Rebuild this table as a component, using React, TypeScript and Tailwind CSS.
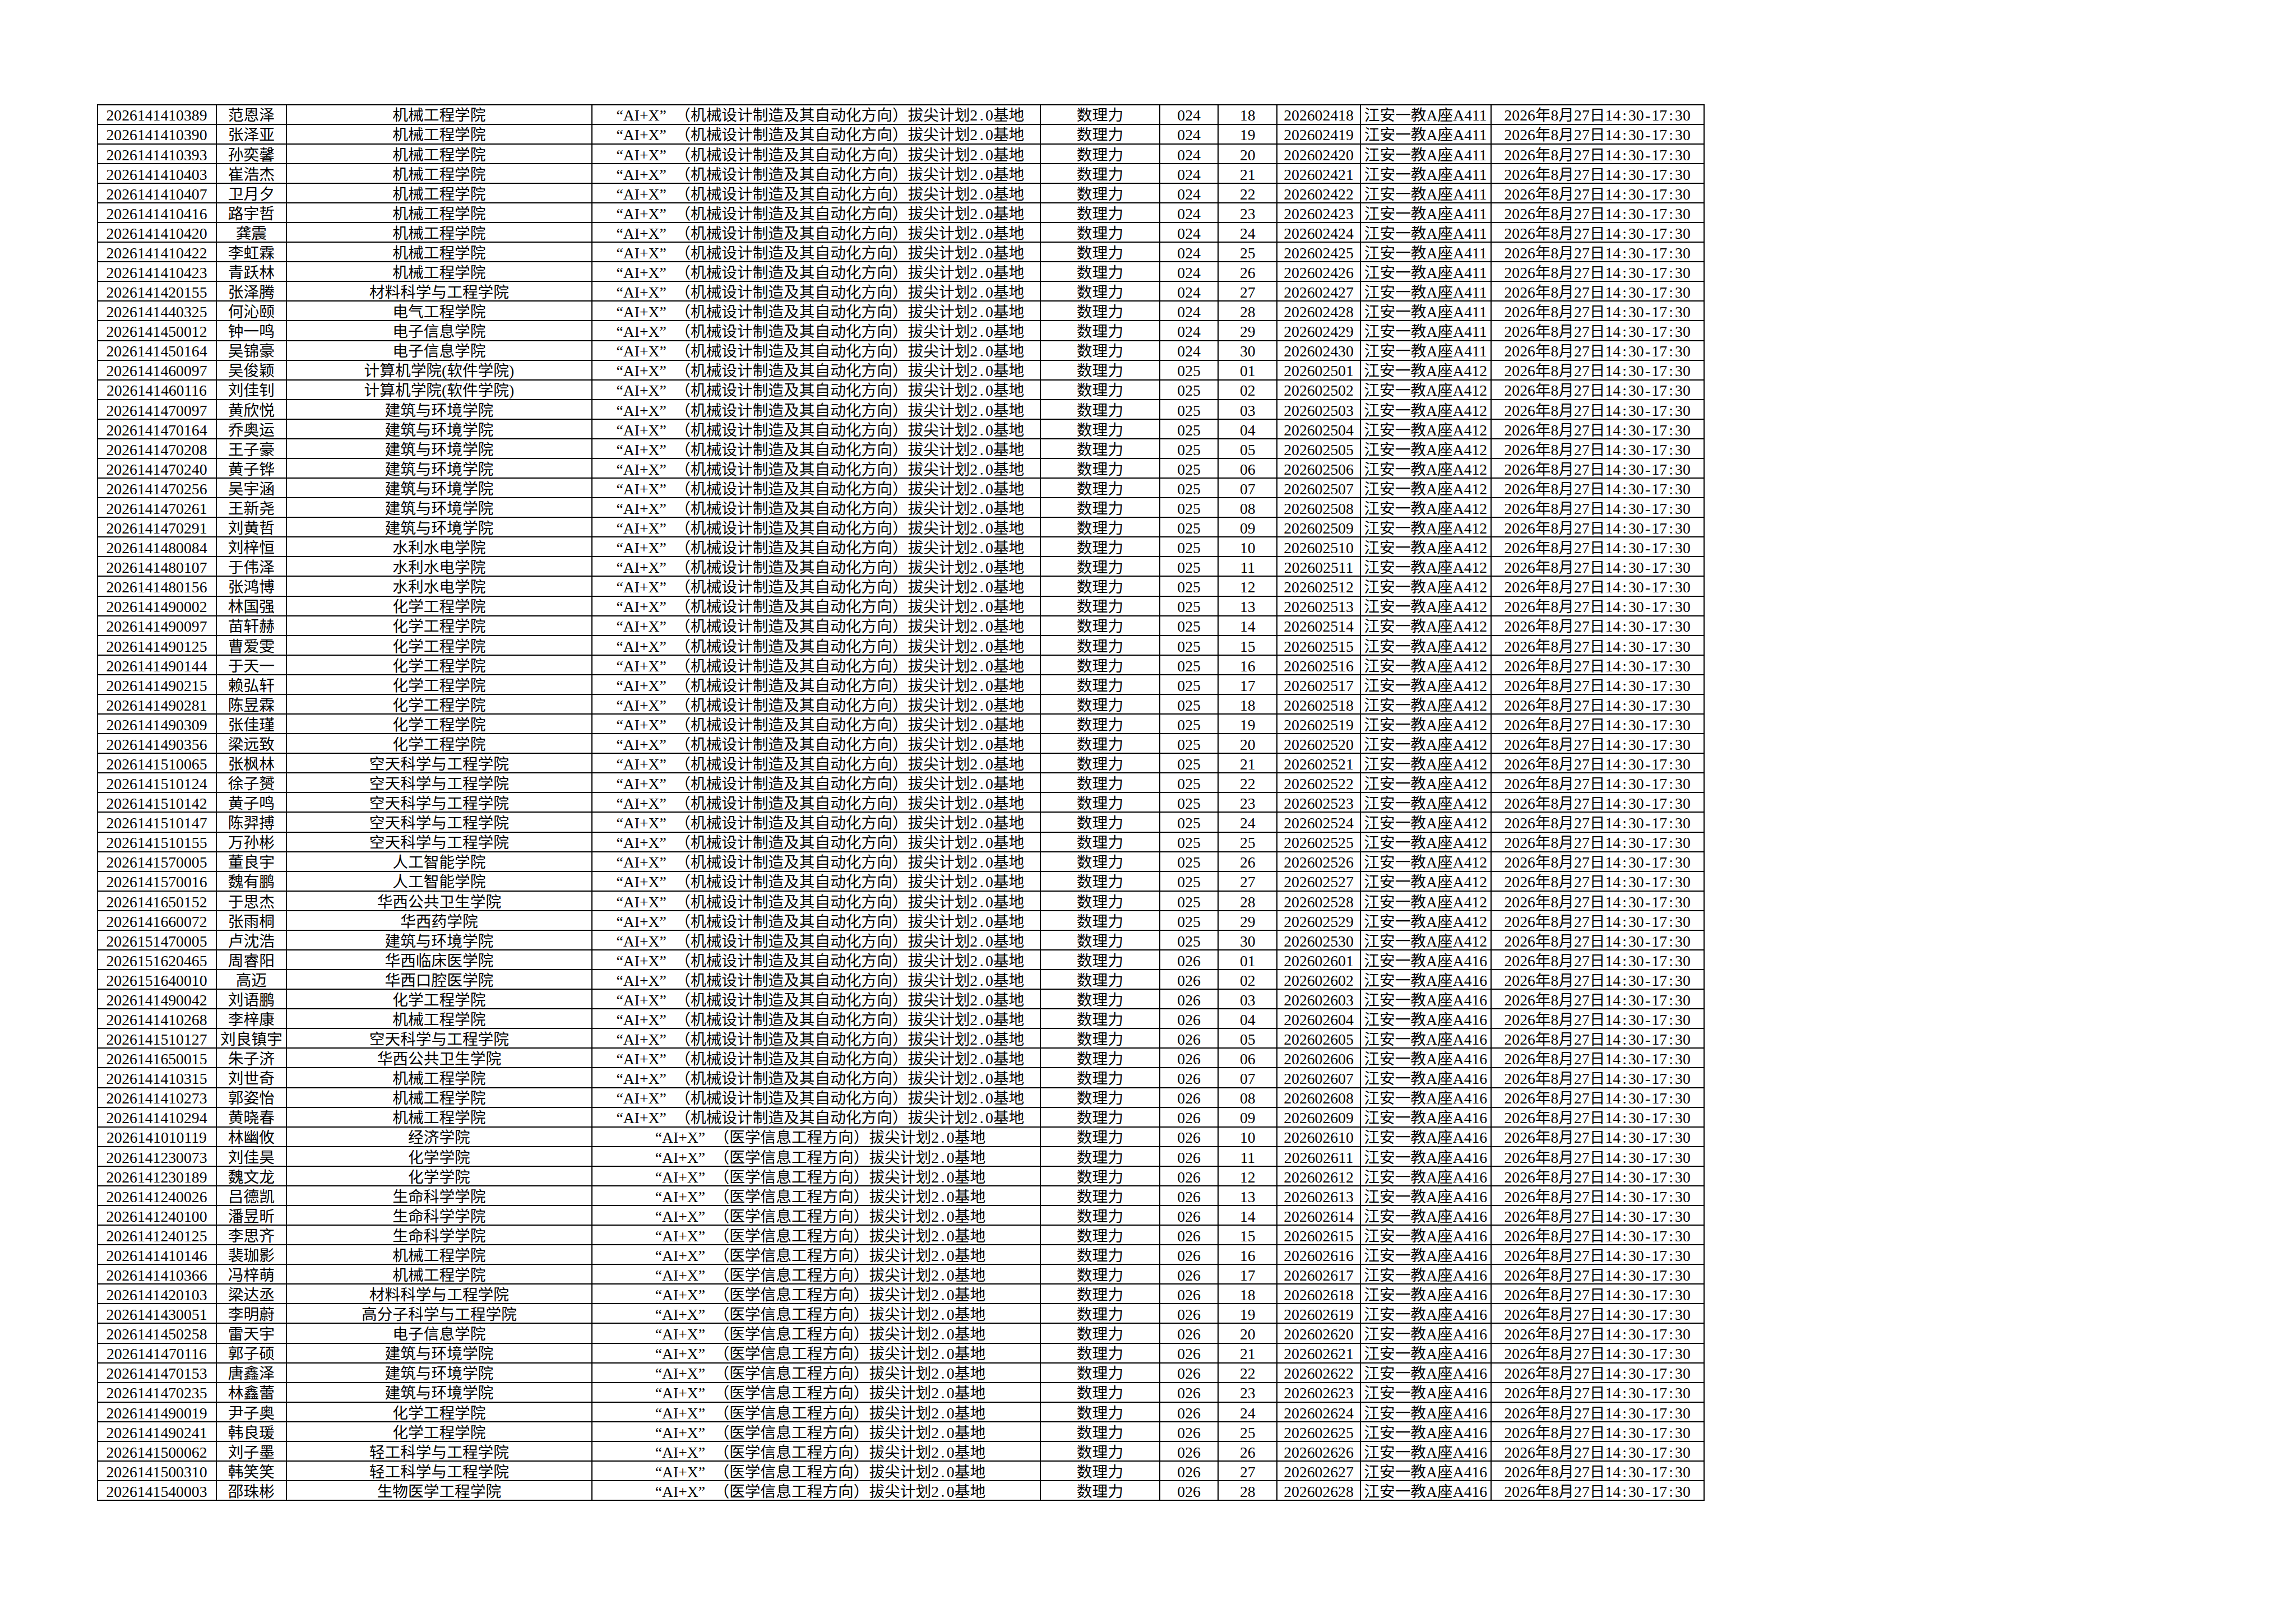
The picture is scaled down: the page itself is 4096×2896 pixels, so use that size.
import React from "react";

const raw = `2026141410389 范恩泽 机械工程学院
2026141410390 张泽亚 机械工程学院
2026141410393 孙奕馨 机械工程学院
2026141410403 崔浩杰 机械工程学院
2026141410407 卫月夕 机械工程学院
2026141410416 路宇哲 机械工程学院
2026141410420 龚震 机械工程学院
2026141410422 李虹霖 机械工程学院
2026141410423 青跃林 机械工程学院
2026141420155 张泽腾 材料科学与工程学院
2026141440325 何沁颐 电气工程学院
2026141450012 钟一鸣 电子信息学院
2026141450164 吴锦豪 电子信息学院
2026141460097 吴俊颖 计算机学院(软件学院)
2026141460116 刘佳钊 计算机学院(软件学院)
2026141470097 黄欣悦 建筑与环境学院
2026141470164 乔奥运 建筑与环境学院
2026141470208 王子豪 建筑与环境学院
2026141470240 黄子铧 建筑与环境学院
2026141470256 吴宇涵 建筑与环境学院
2026141470261 王新尧 建筑与环境学院
2026141470291 刘黄哲 建筑与环境学院
2026141480084 刘梓恒 水利水电学院
2026141480107 于伟泽 水利水电学院
2026141480156 张鸿博 水利水电学院
2026141490002 林国强 化学工程学院
2026141490097 苗轩赫 化学工程学院
2026141490125 曹爱雯 化学工程学院
2026141490144 于天一 化学工程学院
2026141490215 赖弘轩 化学工程学院
2026141490281 陈昱霖 化学工程学院
2026141490309 张佳瑾 化学工程学院
2026141490356 梁远致 化学工程学院
2026141510065 张枫林 空天科学与工程学院
2026141510124 徐子赟 空天科学与工程学院
2026141510142 黄子鸣 空天科学与工程学院
2026141510147 陈羿搏 空天科学与工程学院
2026141510155 万孙彬 空天科学与工程学院
2026141570005 董良宇 人工智能学院
2026141570016 魏有鹏 人工智能学院
2026141650152 于思杰 华西公共卫生学院
2026141660072 张雨桐 华西药学院
2026151470005 卢沈浩 建筑与环境学院
2026151620465 周睿阳 华西临床医学院
2026151640010 高迈 华西口腔医学院
2026141490042 刘语鹏 化学工程学院
2026141410268 李梓康 机械工程学院
2026141510127 刘良镇宇 空天科学与工程学院
2026141650015 朱子济 华西公共卫生学院
2026141410315 刘世奇 机械工程学院
2026141410273 郭姿怡 机械工程学院
2026141410294 黄晓春 机械工程学院
2026141010119 林幽攸 经济学院
2026141230073 刘佳昊 化学学院
2026141230189 魏文龙 化学学院
2026141240026 吕德凯 生命科学学院
2026141240100 潘昱昕 生命科学学院
2026141240125 李思齐 生命科学学院
2026141410146 裴珈影 机械工程学院
2026141410366 冯梓萌 机械工程学院
2026141420103 梁达丞 材料科学与工程学院
2026141430051 李明蔚 高分子科学与工程学院
2026141450258 雷天宇 电子信息学院
2026141470116 郭子硕 建筑与环境学院
2026141470153 唐鑫泽 建筑与环境学院
2026141470235 林鑫蕾 建筑与环境学院
2026141490019 尹子奥 化学工程学院
2026141490241 韩良瑗 化学工程学院
2026141500062 刘子墨 轻工科学与工程学院
2026141500310 韩笑笑 轻工科学与工程学院
2026141540003 邵珠彬 生物医学工程学院`;

type Row = {
  id: string;
  name: string;
  college: string;
  med: boolean;
  group: string;
  seat: string;
  room: string;
};

const rows: Row[] = raw.split("\n").map((line, i) => {
  const [id, name, college] = line.trim().split(" ");
  let group = "024";
  let seatNum = 18 + i;
  if (i >= 13 && i < 43) {
    group = "025";
    seatNum = i - 12;
  } else if (i >= 43) {
    group = "026";
    seatNum = i - 42;
  }
  const room = group === "024" ? "A411" : group === "025" ? "A412" : "A416";
  return {
    id,
    name,
    college,
    med: i >= 52,
    group,
    seat: String(seatNum).padStart(2, "0"),
    room,
  };
});

function Cell({ children }: { children: React.ReactNode }) {
  return (
    <div className="bg-white flex items-end justify-center pb-[0.6px] leading-none whitespace-nowrap">
      <span className="leading-none">{children}</span>
    </div>
  );
}

function Half({ children }: { children: React.ReactNode }) {
  return <span className="inline-block w-[0.5em] text-center">{children}</span>;
}

function Program({ med }: { med: boolean }) {
  return (
    <>
      <span className="inline-block w-[1em] text-right">“</span>
      AI+X
      <span className="inline-block w-[1em] text-left">”</span>
      <span className="font-[family-name:Noto_Sans_CJK_SC]">（</span>
      {med ? "医学信息工程方向" : "机械设计制造及其自动化方向"}
      <span className="font-[family-name:Noto_Sans_CJK_SC]">）</span>
      拔尖计划2<Half>.</Half>0基地
    </>
  );
}

function Time() {
  return (
    <>
      2026年8月27日14<Half>:</Half>30<Half>-</Half>17<Half>:</Half>30
    </>
  );
}

export default function App() {
  return (
    <div className="w-[4096px] h-[2896px] bg-white pl-[172.5px] pt-[185.4px] text-black text-[27.7px] font-[family-name:Liberation_Serif,Noto_Sans_CJK_SC,serif]">
      <div className="inline-grid grid-cols-[210px_123.7px_542.4px_798.2px_211.1px_102.5px_102.8px_146.7px_230.8px_377.9px] auto-rows-[33.09px] gap-[2px] p-[2px] bg-black">
        {rows.map((r) => (
          <React.Fragment key={r.id}>
            <Cell>{r.id}</Cell>
            <Cell>{r.name}</Cell>
            <Cell>{r.college}</Cell>
            <Cell>
              <Program med={r.med} />
            </Cell>
            <Cell>数理力</Cell>
            <Cell>{r.group}</Cell>
            <Cell>{r.seat}</Cell>
            <Cell>{"2026" + r.group + r.seat}</Cell>
            <Cell>{"江安一教A座" + r.room}</Cell>
            <Cell>
              <Time />
            </Cell>
          </React.Fragment>
        ))}
      </div>
    </div>
  );
}
